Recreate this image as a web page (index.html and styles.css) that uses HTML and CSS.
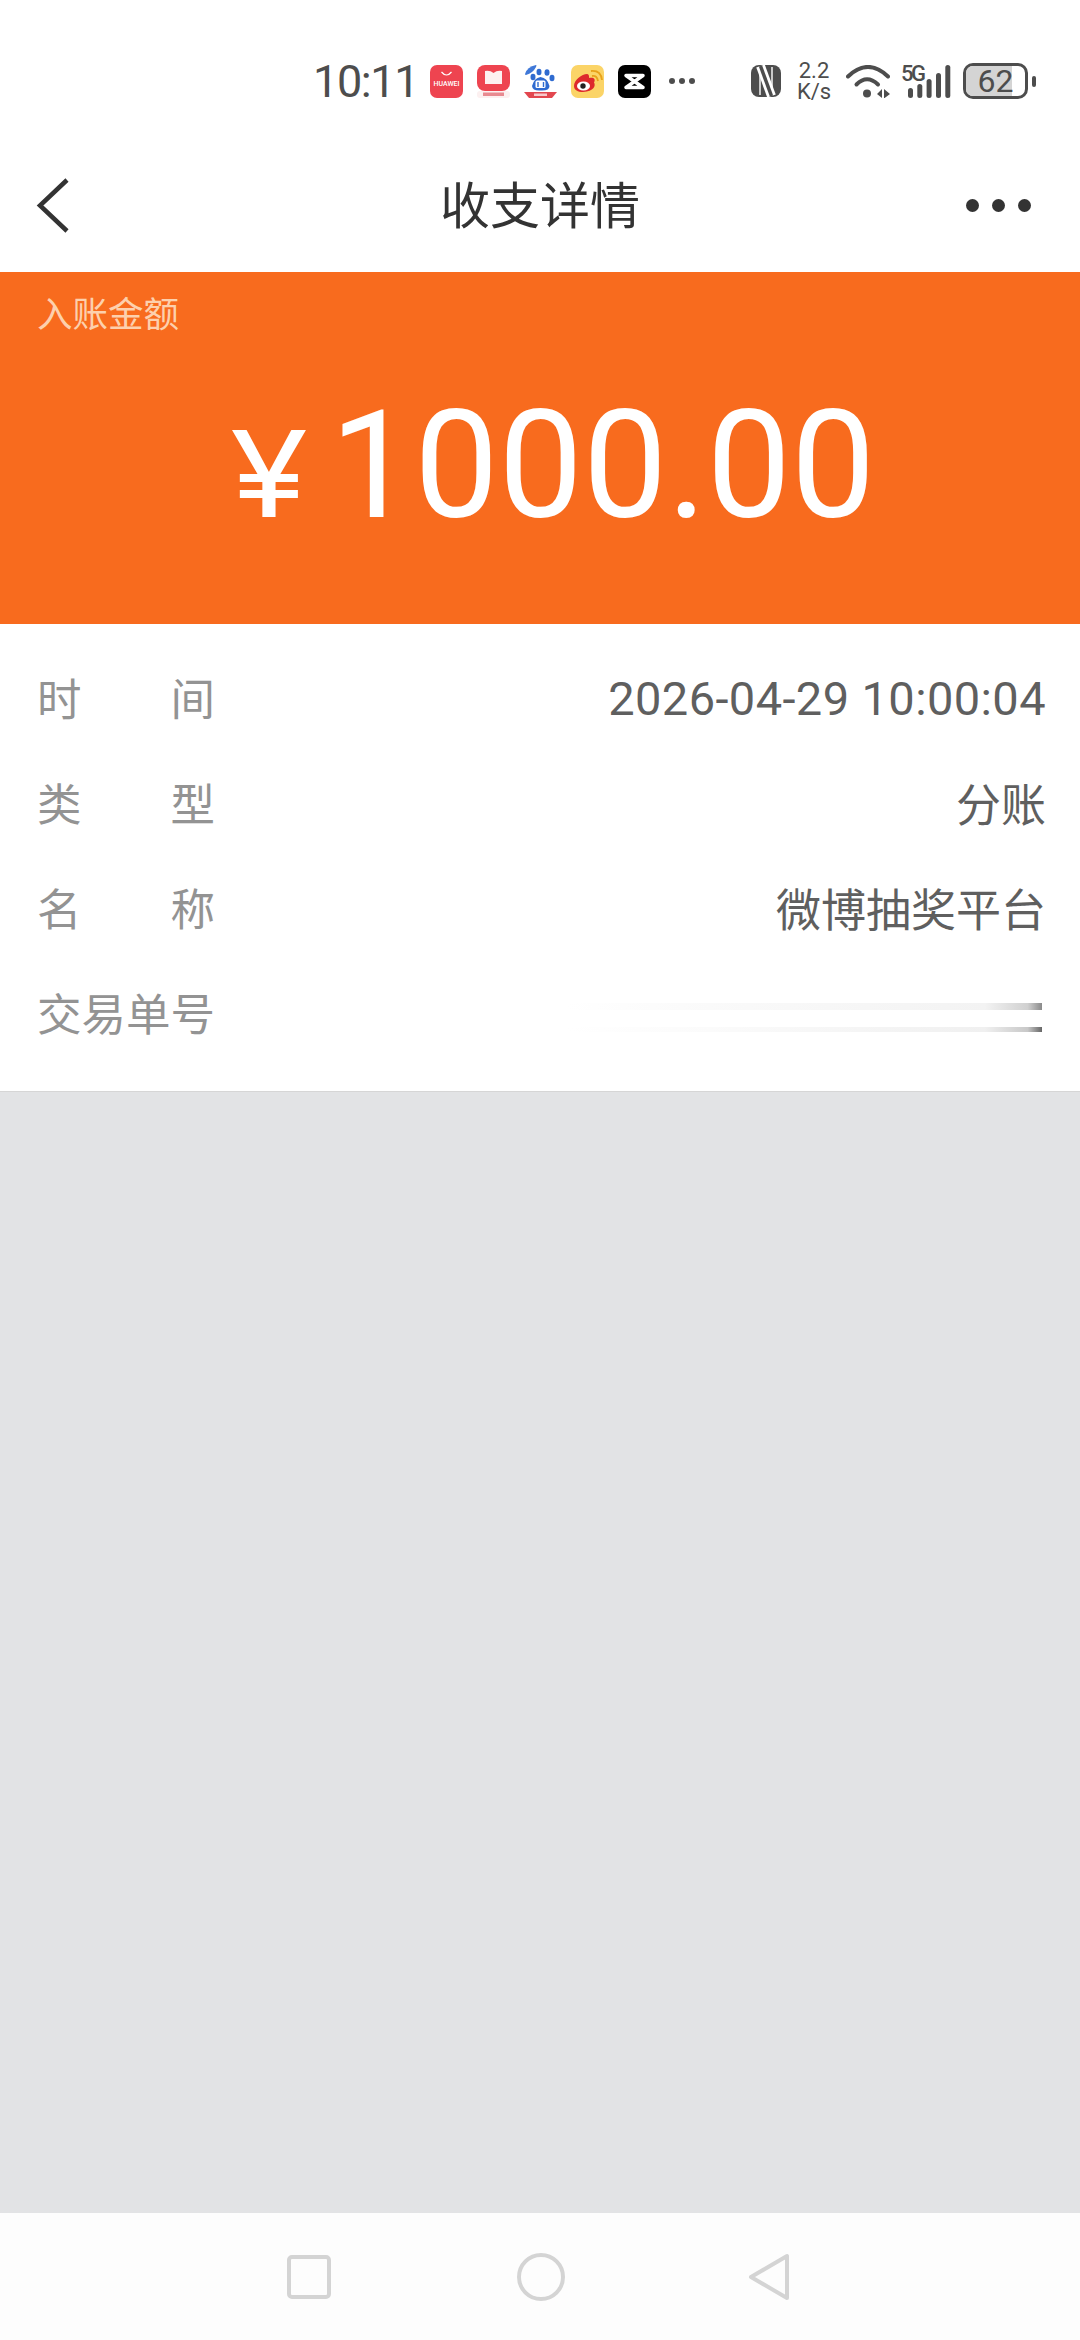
FILE: index.html
```html
<!DOCTYPE html>
<html lang="zh">
<head>
<meta charset="utf-8">
<title>收支详情</title>
<link rel="stylesheet" href="styles.css">
</head>
<body>
<div class="screen">
  <header class="status">
    <span class="clock">10:11</span>
    <div class="apps">
      <svg class="app" viewBox="0 0 33 33"><rect width="33" height="33" rx="7" fill="#ee4450"/><path d="M11.500 7q5 6 10 0" fill="none" stroke="#fff" stroke-width="1.200"/><text class="app-text" x="16.500" y="21" text-anchor="middle" textLength="26" lengthAdjust="spacingAndGlyphs">HUAWEI</text></svg>
      <svg class="app" viewBox="0 0 33 33"><rect x="0" y="26" width="33" height="7" rx="3" fill="#fcf0f0"/><rect x="6" y="27.500" width="21" height="3.500" fill="#e88a90"/><rect width="33" height="26" rx="8" fill="#ee4450"/><path d="M8 6q5-1 8.500 2q3.500-3 8.500-2v13h-17z" fill="#fdf0f0"/></svg>
      <svg class="app" viewBox="0 0 33 33"><path d="M1 9q2-7 11-9q1 0 0 2q-3 6-10 8q-1 0-1-1z" fill="#3f78d8"/><ellipse cx="9" cy="12" rx="2.500" ry="3.200" fill="#2f6bd0"/><ellipse cx="15" cy="7" rx="2.500" ry="3.200" fill="#2f6bd0"/><ellipse cx="23" cy="7.500" rx="2.500" ry="3.200" fill="#2f6bd0"/><ellipse cx="28" cy="13" rx="2.500" ry="3.200" fill="#2f6bd0"/><path d="M8 21q2-8 8.500-9q7 1 9 9q0 5-9 4.500q-8 .5-8.500-4.500z" fill="#2f6bd0"/><rect x="11.500" y="15.500" width="10" height="7.500" rx="1.500" fill="#fff"/><path d="M14 17v5M19.500 17v5" stroke="#2f6bd0" stroke-width="1.400"/><path d="M0 27h33l-5 6h-23z" fill="#e2474f"/><rect x="10" y="28.500" width="13" height="2.500" fill="#f7c9cb"/></svg>
      <svg class="app" viewBox="0 0 33 33"><rect width="33" height="33" rx="7" fill="#fbd467"/><path d="M3 21c0-6 8-12 13-12c3 .5 1.500 4 2.500 4c4-1 6.500 1 4.500 4.500c2 3 0 9-11 9.500c-5 0-9-2-9-6z" fill="#dd2a2c"/><ellipse cx="12.500" cy="21" rx="6.500" ry="4.500" fill="#fff"/><circle cx="12" cy="21" r="2.700" fill="#222"/><path d="M21 11q5-1 6 5M20 6q10-1 11 9" fill="none" stroke="#e8a21a" stroke-width="1.800"/></svg>
      <svg class="app" viewBox="0 0 33 33"><rect width="33" height="33" rx="7" fill="#000"/><path d="M8 10.500H25L8 22.500H25Z" fill="none" stroke="#fff" stroke-width="3.500" stroke-linejoin="round"/></svg>
    </div>
    <div class="ellipsis"><i></i><i></i><i></i></div>
    <div class="sys">
      <svg class="nfc" viewBox="0 0 30 32"><rect width="30" height="32" rx="8" fill="#4d4d4d"/><path d="M9 2v28M21 2v28" stroke="#fff" stroke-width="1.400"/><path d="M9.500 1L20.500 31" stroke="#fff" stroke-width="9"/><path d="M9.500 1L20.500 31" stroke="#4d4d4d" stroke-width="3.500"/></svg>
      <div class="speed"><span>2.2</span><span>K/s</span></div>
      <svg class="wifi" viewBox="0 0 44 33"><path d="M2 11.500Q22-7.500 42 11.500" fill="none" stroke="#4d4d4d" stroke-width="4" stroke-linecap="round"/><path d="M10.500 19.500Q21 9 32 19.500" fill="none" stroke="#4d4d4d" stroke-width="4" stroke-linecap="round"/><circle cx="21" cy="28.500" r="4" fill="#4d4d4d"/><path d="M31 29l5-5v9zM38 24l6 5l-6 4.500z" fill="#4d4d4d"/></svg>
      <div class="signal">
        <span class="net">5G</span>
        <svg class="bars" viewBox="0 0 43 33"><rect x="0" y="23" width="5" height="10" rx="2.500" fill="#4d4d4d"/><rect x="9.300" y="19" width="5" height="14" rx="2.500" fill="#4d4d4d"/><rect x="18.600" y="14" width="5" height="19" rx="2.500" fill="#4d4d4d"/><rect x="28" y="8" width="5" height="25" rx="2.500" fill="#4d4d4d"/><rect x="37.300" y="0" width="5" height="33" rx="2.500" fill="#4d4d4d"/></svg>
      </div>
      <div class="battery">
        <div class="cell"><div class="level"></div><span class="pct">62</span></div>
        <div class="nub"></div>
      </div>
    </div>
  </header>

  <nav class="topbar">
    <svg class="back" viewBox="0 0 33 55"><path d="M31 2L4 27.500L31 53" fill="none" stroke="#333" stroke-width="4.500"/></svg>
    <h1 class="title">收支详情</h1>
    <div class="more"><i></i><i></i><i></i></div>
  </nav>

  <section class="hero">
    <div class="hero-label">入账金额</div>
    <div class="amount"><span class="yen">¥</span><span class="value">1000.00</span></div>
  </section>

  <section class="details">
    <div class="row"><span class="key spaced"><b>时</b><b>间</b></span><span class="val date">2026-04-29 10:00:04</span></div>
    <div class="row"><span class="key spaced"><b>类</b><b>型</b></span><span class="val">分账</span></div>
    <div class="row"><span class="key spaced"><b>名</b><b>称</b></span><span class="val">微博抽奖平台</span></div>
    <div class="row"><span class="key">交易单号</span><div class="redacted"><i class="thick"></i><i class="thin"></i></div></div>
  </section>

  <main class="empty"></main>

  <footer class="navbar">
    <svg class="nav-square" viewBox="0 0 44 44"><rect x="2" y="2" width="40" height="40" rx="3" fill="none" stroke="#d4d4d4" stroke-width="4"/></svg>
    <svg class="nav-circle" viewBox="0 0 48 48"><circle cx="24" cy="24" r="22" fill="none" stroke="#d4d4d4" stroke-width="4"/></svg>
    <svg class="nav-back" viewBox="0 0 42 48"><path d="M39 3v42L3 24z" fill="none" stroke="#d4d4d4" stroke-width="4" stroke-linejoin="round"/></svg>
  </footer>
</div>
</body>
</html>
```
FILE: styles.css
```css
* { box-sizing: border-box; }
html, body { margin: 0; padding: 0; }
body { font-family: "Roboto", "Noto Sans CJK SC", sans-serif; background: #fff; }
.screen { width: 1080px; height: 2340px; display: flex; flex-direction: column; overflow: hidden; }

.status { height: 142px; padding: 20px 0 0 313px; display: flex; align-items: center; color: #4d4d4d; }
.clock { font-size: 45px; width: 117px; letter-spacing: -1.400px; white-space: nowrap; }
.apps { display: flex; gap: 14px; }
.app { width: 33px; height: 33px; display: block; }
.app-text { font-family: "Roboto", sans-serif; font-size: 6.500px; font-weight: 500; fill: #fff; }
.ellipsis { display: flex; gap: 4px; margin-left: 18px; }
.ellipsis i, .more i { display: block; border-radius: 50%; }
.ellipsis i { width: 6px; height: 6px; background: #4d4d4d; }
.sys { display: flex; align-items: center; margin-left: 56px; }
.nfc { width: 30px; height: 32px; }
.speed { display: flex; flex-direction: column; align-items: center; font-size: 22px; line-height: 21px; margin-left: 16px; width: 34px; }
.wifi { width: 44px; height: 33px; margin-left: 15px; }
.signal { position: relative; width: 51px; height: 33px; margin-left: 11px; }
.net { position: absolute; left: 0; top: -4px; font-size: 22px; font-weight: 500; letter-spacing: -2.500px; line-height: 26px; }
.bars { position: absolute; left: 7px; top: 0; width: 43px; height: 33px; }
.battery { display: flex; align-items: center; margin-left: 11px; }
.cell { position: relative; width: 65px; height: 36px; border: 3px solid #4d4d4d; border-radius: 10px; overflow: hidden; display: flex; align-items: center; justify-content: center; }
.level { position: absolute; left: 0; top: 0; bottom: 0; width: 46px; background: #d4d4d4; }
.pct { position: relative; font-size: 32px; line-height: 1; }
.nub { width: 4px; height: 11px; background: #4d4d4d; border-radius: 2px; margin-left: 4px; }

.topbar { height: 130px; display: grid; grid-template-columns: 1fr auto 1fr; align-items: center; padding-bottom: 11px; }
.back { width: 33px; height: 55px; margin: 8px 0 0 36px; display: block; }
.title { margin: 0; font-size: 50px; font-weight: 400; color: #333; line-height: 1; font-family: "Noto Sans CJK SC", sans-serif; }
.more { justify-self: end; margin: 7px 49px 0 0; display: flex; gap: 13px; }
.more i { width: 13px; height: 13px; background: #333; }

.hero { height: 352px; background: #f86b1e; padding-left: 37px; display: flex; flex-direction: column; }
.hero-label { font-size: 35.500px; line-height: 40px; margin-top: 20px; color: #fdd0ad; font-family: "Noto Sans CJK SC", sans-serif; }
.amount { display: flex; align-items: baseline; color: #fff; margin-top: 47px; padding-left: 193px; }
.yen { font-family: "Inter", sans-serif; font-size: 120px; margin-right: 34px; line-height: 1; transform: scaleX(1.180); transform-origin: left center; }
.value { font-size: 150px; line-height: 1.17; }

.details { height: 468px; background: #fff; padding: 21px 34px 0 37px; border-bottom: 1px solid #d6d6d6; }
.row { height: 105px; display: flex; align-items: center; justify-content: space-between; }
.key { width: 178px; font-size: 44.500px; color: #939393; font-family: "Noto Sans CJK SC", sans-serif; display: flex; justify-content: space-between; line-height: 1; white-space: nowrap; }
.key b { font-weight: 400; }
.val { font-size: 45px; color: #5f5f5f; line-height: 1; font-family: "Noto Sans CJK SC", sans-serif; }
.date { font-family: "Roboto", sans-serif; font-size: 47px; letter-spacing: .4px; margin-top: 2px; }
.redacted { width: 475px; height: 29px; display: flex; flex-direction: column; justify-content: space-between; margin: 10px 4px 0 0; }
.redacted i { display: block; }
.thick { height: 7px; background: linear-gradient(90deg, #fff 0%, #fafafa 30%, #f3f3f3 88%, #d0d0d0 97%, #8a8a8a 100%); }
.thin { height: 5px; background: linear-gradient(90deg, #fff 0%, #fbfbfb 30%, #f0f0f0 88%, #c8c8c8 97%, #666 100%); }

.empty { flex: 1; background: #e2e3e5; }

.navbar { height: 127px; background: #fdfdfd; display: flex; align-items: center; padding-left: 287px; }
.nav-square { width: 44px; height: 44px; }
.nav-circle { width: 48px; height: 48px; margin-left: 186px; }
.nav-back { width: 42px; height: 48px; margin-left: 183px; }
```
